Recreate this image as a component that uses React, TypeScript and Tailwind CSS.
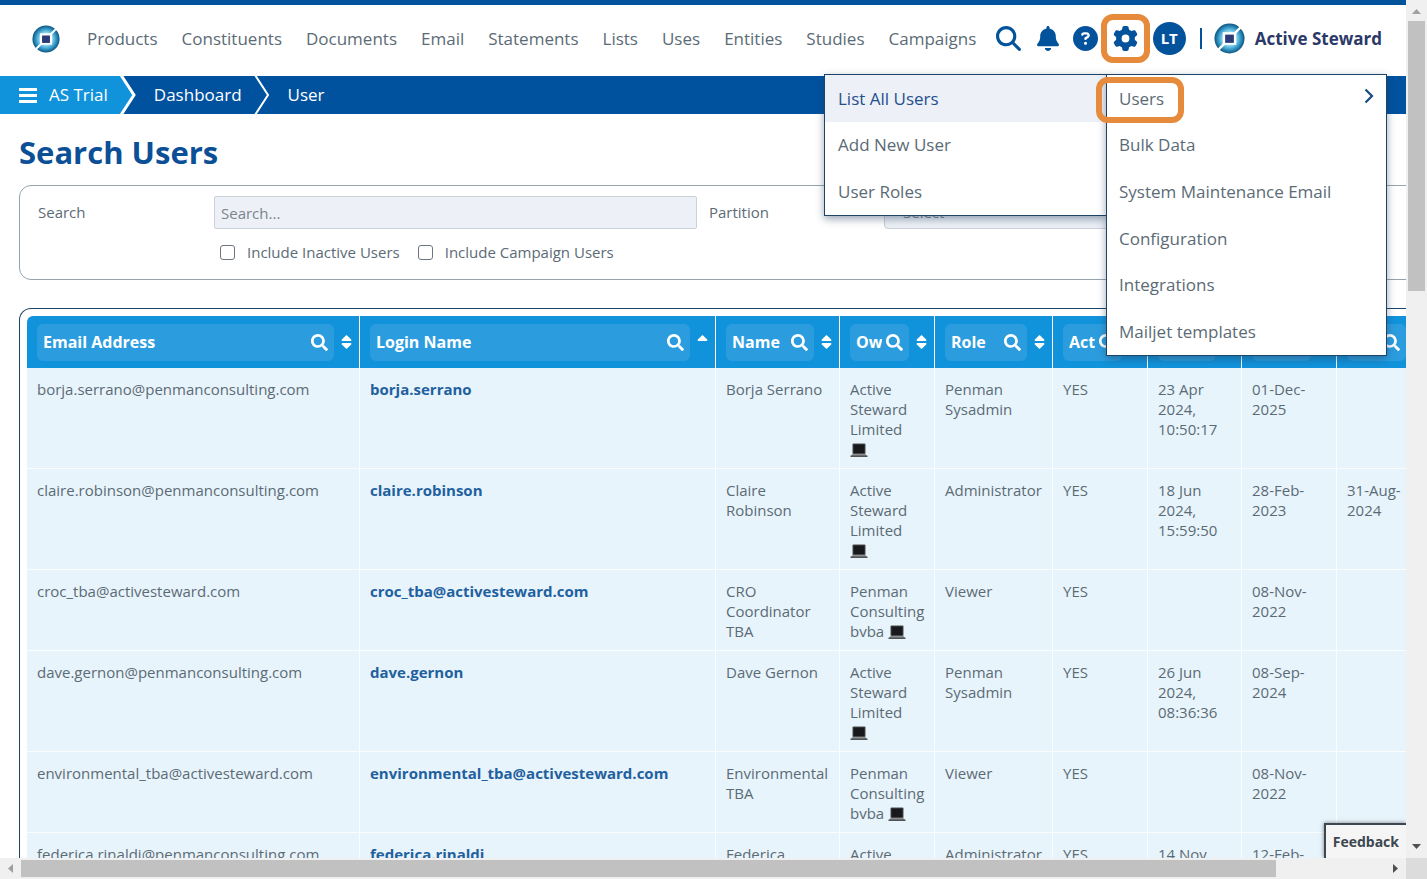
import { FaSearch, FaSort, FaSortUp } from "react-icons/fa";
import {
  FaBell,
  FaCircleQuestion,
  FaGear,
  FaMagnifyingGlass,
} from "react-icons/fa6";

interface User {
  email: string;
  login: string;
  name: string;
  owner: string;
  role: string;
  active: string;
  lastLogin: string;
  trained: string;
  expiry: string;
}

interface Column {
  label: string;
  width: string;
  sorted?: boolean;
}

const navItems: string[] = [
  "Products",
  "Constituents",
  "Documents",
  "Email",
  "Statements",
  "Lists",
  "Uses",
  "Entities",
  "Studies",
  "Campaigns",
];

const settingsItems: string[] = [
  "Users",
  "Bulk Data",
  "System Maintenance Email",
  "Configuration",
  "Integrations",
  "Mailjet templates",
];

const userItems: string[] = ["List All Users", "Add New User", "User Roles"];

const columns: Column[] = [
  { label: "Email Address", width: "w-[333px]" },
  { label: "Login Name", width: "w-[356px]", sorted: true },
  { label: "Name", width: "w-[124px]" },
  { label: "Owner", width: "w-[95px]" },
  { label: "Role", width: "w-[118px]" },
  { label: "Active", width: "w-[95px]" },
  { label: "Last", width: "w-[94px]" },
  { label: "Start", width: "w-[95px]" },
  { label: "End", width: "w-[95px]" },
];

const users: User[] = [
  {
    email: "borja.serrano@penmanconsulting.com",
    login: "borja.serrano",
    name: "Borja Serrano",
    owner: "Active Steward Limited",
    role: "Penman Sysadmin",
    active: "YES",
    lastLogin: "23 Apr 2024, 10:50:17",
    trained: "01-Dec-2025",
    expiry: "",
  },
  {
    email: "claire.robinson@penmanconsulting.com",
    login: "claire.robinson",
    name: "Claire Robinson",
    owner: "Active Steward Limited",
    role: "Administrator",
    active: "YES",
    lastLogin: "18 Jun 2024, 15:59:50",
    trained: "28-Feb-2023",
    expiry: "31-Aug-2024",
  },
  {
    email: "croc_tba@activesteward.com",
    login: "croc_tba@activesteward.com",
    name: "CRO Coordinator TBA",
    owner: "Penman Consulting bvba",
    role: "Viewer",
    active: "YES",
    lastLogin: "",
    trained: "08-Nov-2022",
    expiry: "",
  },
  {
    email: "dave.gernon@penmanconsulting.com",
    login: "dave.gernon",
    name: "Dave Gernon",
    owner: "Active Steward Limited",
    role: "Penman Sysadmin",
    active: "YES",
    lastLogin: "26 Jun 2024, 08:36:36",
    trained: "08-Sep-2024",
    expiry: "",
  },
  {
    email: "environmental_tba@activesteward.com",
    login: "environmental_tba@activesteward.com",
    name: "Environmental TBA",
    owner: "Penman Consulting bvba",
    role: "Viewer",
    active: "YES",
    lastLogin: "",
    trained: "08-Nov-2022",
    expiry: "",
  },
  {
    email: "federica.rinaldi@penmanconsulting.com",
    login: "federica.rinaldi",
    name: "Federica Rinaldi",
    owner: "Active Steward Limited",
    role: "Administrator",
    active: "YES",
    lastLogin: "14 Nov 2023, 09:12:44",
    trained: "12-Feb-2023",
    expiry: "",
  },
];

const Logo = ({ id, className }: { id: string; className: string }) => (
  <svg viewBox="0 0 32 32" className={className} aria-hidden="true">
    <defs>
      <radialGradient id={id}>
        <stop offset="0.4" stopColor="#a4e4f8" />
        <stop offset="0.7" stopColor="#3fa3d0" />
        <stop offset="1" stopColor="#0b5480" />
      </radialGradient>
    </defs>
    <circle cx="16" cy="16" r="15.5" fill={`url(#${id})`} />
    <path d="M3 29 L11 21 M21 11 L29 3" stroke="#fff" strokeWidth="2.4" />
    <rect x="9" y="9.5" width="14" height="13" fill="#fff" />
    <rect x="11.5" y="12" width="9" height="8.5" fill="#2b3a78" />
  </svg>
);

const Laptop = () => (
  <svg
    viewBox="0 0 18 14"
    className="inline-block h-[14px] w-[18px] align-[-2px]"
    aria-hidden="true"
  >
    <rect x="2.5" y="0.5" width="13" height="10.5" rx="1" fill="#4a4a4a" />
    <rect x="3.5" y="1.5" width="11" height="8.5" fill="#17191c" />
    <path d="M2.5 11 H15.5 L17.5 13.5 H0.5 Z" fill="#8b9094" />
    <path d="M0.5 13.2 H17.5" stroke="#222" strokeWidth="1" />
  </svg>
);

const Header = () => {
  return (
    <header className="relative z-20 flex h-[76px] items-center border-t-5 border-[#03529c] bg-white pl-8 pr-6 pb-1">
      <a href="#home" aria-label="Home" className="mr-[27px]">
        <Logo id="logoSmall" className="size-7" />
      </a>
      <nav className="flex gap-6 text-[17px] text-[#5b6b76]">
        {navItems.map((item) => (
          <a key={item} href="#nav">
            {item}
          </a>
        ))}
      </nav>
      <div className="ml-auto flex items-center text-[#03529c]">
        <button aria-label="Search" className="mr-4">
          <FaMagnifyingGlass className="size-[25px]" />
        </button>
        <button aria-label="Notifications" className="mr-[14px]">
          <FaBell className="h-[25px] w-[22px]" />
        </button>
        <button aria-label="Help" className="mr-[15px]">
          <FaCircleQuestion className="size-[25px]" />
        </button>
        <button aria-label="Settings" className="relative mr-[15px]">
          <FaGear className="size-[25px]" />
          <span className="absolute -inset-3 rounded-xl border-6 border-[#e68a3c]" />
        </button>
        <button className="size-[33px] rounded-full bg-[#03529c] text-[15px] font-bold text-white">
          LT
        </button>
        <span className="ml-[14px] mr-3 h-[21px] w-0.5 bg-[#03529c]" />
        <a
          href="#home"
          className="flex items-center gap-2.5 text-[17px] font-bold text-[#2b3868]"
        >
          <Logo id="logoBrand" className="size-[31px]" />
          Active Steward
        </a>
      </div>
    </header>
  );
};

const SettingsMenu = () => {
  return (
    <div className="absolute right-[19px] top-[74px] z-30 flex items-start text-[17px] text-[#5b6b76]">
      <ul className="-mr-px grid h-[142px] w-[283px] grid-rows-3 border border-[#1d4466] bg-white shadow-[0_3px_8px_rgba(30,60,90,0.45)]">
        {userItems.map((item, index) => (
          <li
            key={item}
            className={`flex items-center px-[13px] ${index === 0 ? "bg-[#edf0f7] text-[#1f4f8c]" : ""}`}
          >
            <a href="#users">{item}</a>
          </li>
        ))}
      </ul>
      <ul className="relative grid h-[282px] w-[281px] grid-rows-6 border border-[#1d4466] bg-white shadow-[0_3px_8px_rgba(30,60,90,0.45)]">
        {settingsItems.map((item, index) => (
          <li key={item} className="flex items-center justify-between px-3">
            <a href="#settings">{item}</a>
            {index === 0 && (
              <svg
                viewBox="0 0 10 16"
                className="mb-1 h-4 w-2.5"
                fill="none"
                stroke="#174a80"
                strokeWidth="2.2"
                aria-hidden="true"
              >
                <path d="M1.5 1.5 L8 8 L1.5 14.5" />
              </svg>
            )}
          </li>
        ))}
        <span className="absolute -left-[11px] top-0.5 h-[46px] w-[88px] rounded-xl border-6 border-[#e68a3c]" />
      </ul>
    </div>
  );
};

const Breadcrumb = () => {
  return (
    <nav className="flex h-[38px] items-center bg-[#00529f] text-[17px] text-white">
      <div className="flex h-full items-center bg-[#1193db] pl-[19px]">
        <button aria-label="Menu" className="mr-3">
          <svg viewBox="0 0 18 15" className="h-[15px] w-[18px]" fill="#fff">
            <path d="M0 0h18v3H0zM0 6h18v3H0zM0 12h18v3H0z" />
          </svg>
        </button>
        <a href="#trial" className="mr-3">
          AS Trial
        </a>
      </div>
      <svg viewBox="0 0 16 38" className="h-[38px] w-4" aria-hidden="true">
        <path d="M0 0 L14 19 L0 38 Z" fill="#1193db" />
        <path d="M1 -1 L14 19 L1 39" fill="none" stroke="#fff" strokeWidth="3" />
      </svg>
      <a href="#dashboard" className="ml-[18px] mr-3">
        Dashboard
      </a>
      <svg viewBox="0 0 16 38" className="h-[38px] w-4" aria-hidden="true">
        <path d="M1 -1 L14 19 L1 39" fill="none" stroke="#fff" strokeWidth="2" />
      </svg>
      <a href="#user" className="ml-[18px]">
        User
      </a>
    </nav>
  );
};

const SearchPanel = () => {
  return (
    <form className="mt-3 h-[95px] rounded-xl border border-[#95a3ad] pl-[18px] pt-[10px] text-[15px]">
      <div className="flex items-center">
        <label htmlFor="search" className="w-44">
          Search
        </label>
        <input
          id="search"
          type="text"
          placeholder="Search..."
          className="h-[33px] w-[483px] rounded-xs border border-[#c9d1d9] bg-[#edf0f6] px-1.5 placeholder:text-[#7a858e]"
        />
        <label htmlFor="partition" className="ml-3 w-[175px]">
          Partition
        </label>
        <select
          id="partition"
          className="h-[33px] w-[483px] appearance-none rounded-sm border border-[#c9d1d9] bg-[#edf0f6] px-[18px] text-[#7a858e]"
        >
          <option>Select</option>
        </select>
      </div>
      <div className="ml-[182px] mt-3 flex items-center gap-[18px]">
        <label className="flex items-center gap-3">
          <input
            type="checkbox"
            className="size-[15px] appearance-none rounded-[3px] border border-[#6b7680] bg-white"
          />
          Include Inactive Users
        </label>
        <label className="flex items-center gap-3">
          <input
            type="checkbox"
            className="size-[15px] appearance-none rounded-[3px] border border-[#6b7680] bg-white"
          />
          Include Campaign Users
        </label>
      </div>
    </form>
  );
};

const ColumnHeader = ({ column }: { column: Column }) => {
  return (
    <th
      className={`h-[52px] border-r border-white bg-[#1193db] p-0 pl-2.5 pr-[7px] first:rounded-tl-md ${column.width}`}
    >
      <div className="flex items-center gap-[7px] text-white">
        <div className="flex h-[37px] min-w-0 flex-1 items-center gap-1 rounded-md bg-[#2b9ddf] px-1.5">
          <input
            type="text"
            aria-label={column.label}
            placeholder={column.label}
            className="min-w-0 flex-1 text-base font-bold placeholder:text-white"
          />
          <FaSearch className="size-[17px] shrink-0" />
        </div>
        <button aria-label={`Sort by ${column.label}`} className="shrink-0">
          {column.sorted ? (
            <FaSortUp className="h-[18px] w-[11px]" />
          ) : (
            <FaSort className="h-[18px] w-[11px]" />
          )}
        </button>
      </div>
    </th>
  );
};

const UserTable = () => {
  const cell =
    "border-b border-r border-white/80 px-2.5 pt-[11px] pb-[9px] align-top";
  return (
    <div className="mt-7 rounded-t-xl border border-b-0 border-[#1d4466] p-[7px]">
      <table className="w-[1405px] table-fixed border-separate border-spacing-0 text-left text-[15px] leading-5">
        <thead>
          <tr>
            {columns.map((column) => (
              <ColumnHeader key={column.label} column={column} />
            ))}
          </tr>
        </thead>
        <tbody className="bg-[#e8f4fb]">
          {users.map((user) => (
            <tr key={user.email}>
              <td className={cell}>{user.email}</td>
              <td className={cell}>
                <a href="#login" className="font-bold text-[#1f609f]">
                  {user.login}
                </a>
              </td>
              <td className={cell}>{user.name}</td>
              <td className={cell}>
                {user.owner} <Laptop />
              </td>
              <td className={cell}>{user.role}</td>
              <td className={cell}>{user.active}</td>
              <td className={cell}>{user.lastLogin}</td>
              <td className={cell}>{user.trained}</td>
              <td className={cell}>{user.expiry}</td>
            </tr>
          ))}
        </tbody>
      </table>
    </div>
  );
};

const VerticalScrollbar = () => (
  <div className="flex w-[21px] shrink-0 flex-col items-center bg-[#f0f0f0]">
    <svg viewBox="0 0 21 21" className="size-[21px]" fill="#a0a0a0">
      <path d="M6 14 L10.500 9 L15 14 Z" />
    </svg>
    <div className="h-[270px] w-[17px] bg-[#c1c1c1]" />
    <svg viewBox="0 0 21 21" className="mt-auto size-[21px]" fill="#505050">
      <path d="M6 7 L15 7 L10.500 12 Z" />
    </svg>
  </div>
);

const HorizontalScrollbar = () => (
  <div className="flex h-[21px] shrink-0 items-center bg-[#f0f0f0]">
    <svg viewBox="0 0 21 21" className="size-[21px]" fill="#a0a0a0">
      <path d="M13 6 L8 10.500 L13 15 Z" />
    </svg>
    <div className="flex-1">
      <div className="h-[17px] w-[92%] bg-[#c1c1c1]" />
    </div>
    <svg viewBox="0 0 21 21" className="size-[21px]" fill="#505050">
      <path d="M8 6 L13 10.500 L8 15 Z" />
    </svg>
    <div className="h-full w-[21px] bg-[#dcdcdc]" />
  </div>
);

const App = () => {
  return (
    <div className="flex h-screen flex-col bg-white font-['Open_Sans','Noto_Sans',sans-serif] text-[#5b6b76]">
      <div className="flex min-h-0 flex-1">
        <div className="relative min-w-0 flex-1 overflow-hidden">
          <Header />
          <SettingsMenu />
          <Breadcrumb />
          <main className="w-max min-w-full px-[19px] pt-[17px]">
            <h1 className="text-[31px] leading-[42px] font-bold text-[#0b4f97]">
              Search Users
            </h1>
            <SearchPanel />
            <UserTable />
          </main>
          <button className="absolute bottom-0 right-0 z-10 h-[35px] border-l-2 border-t-2 border-[#3c474f] bg-[#f5f5f5] px-[7px] text-sm font-bold text-[#3c474f] shadow-[0_0_4px_rgba(0,0,0,0.5)]">
            Feedback
          </button>
        </div>
        <VerticalScrollbar />
      </div>
      <HorizontalScrollbar />
    </div>
  );
};

export default App;
